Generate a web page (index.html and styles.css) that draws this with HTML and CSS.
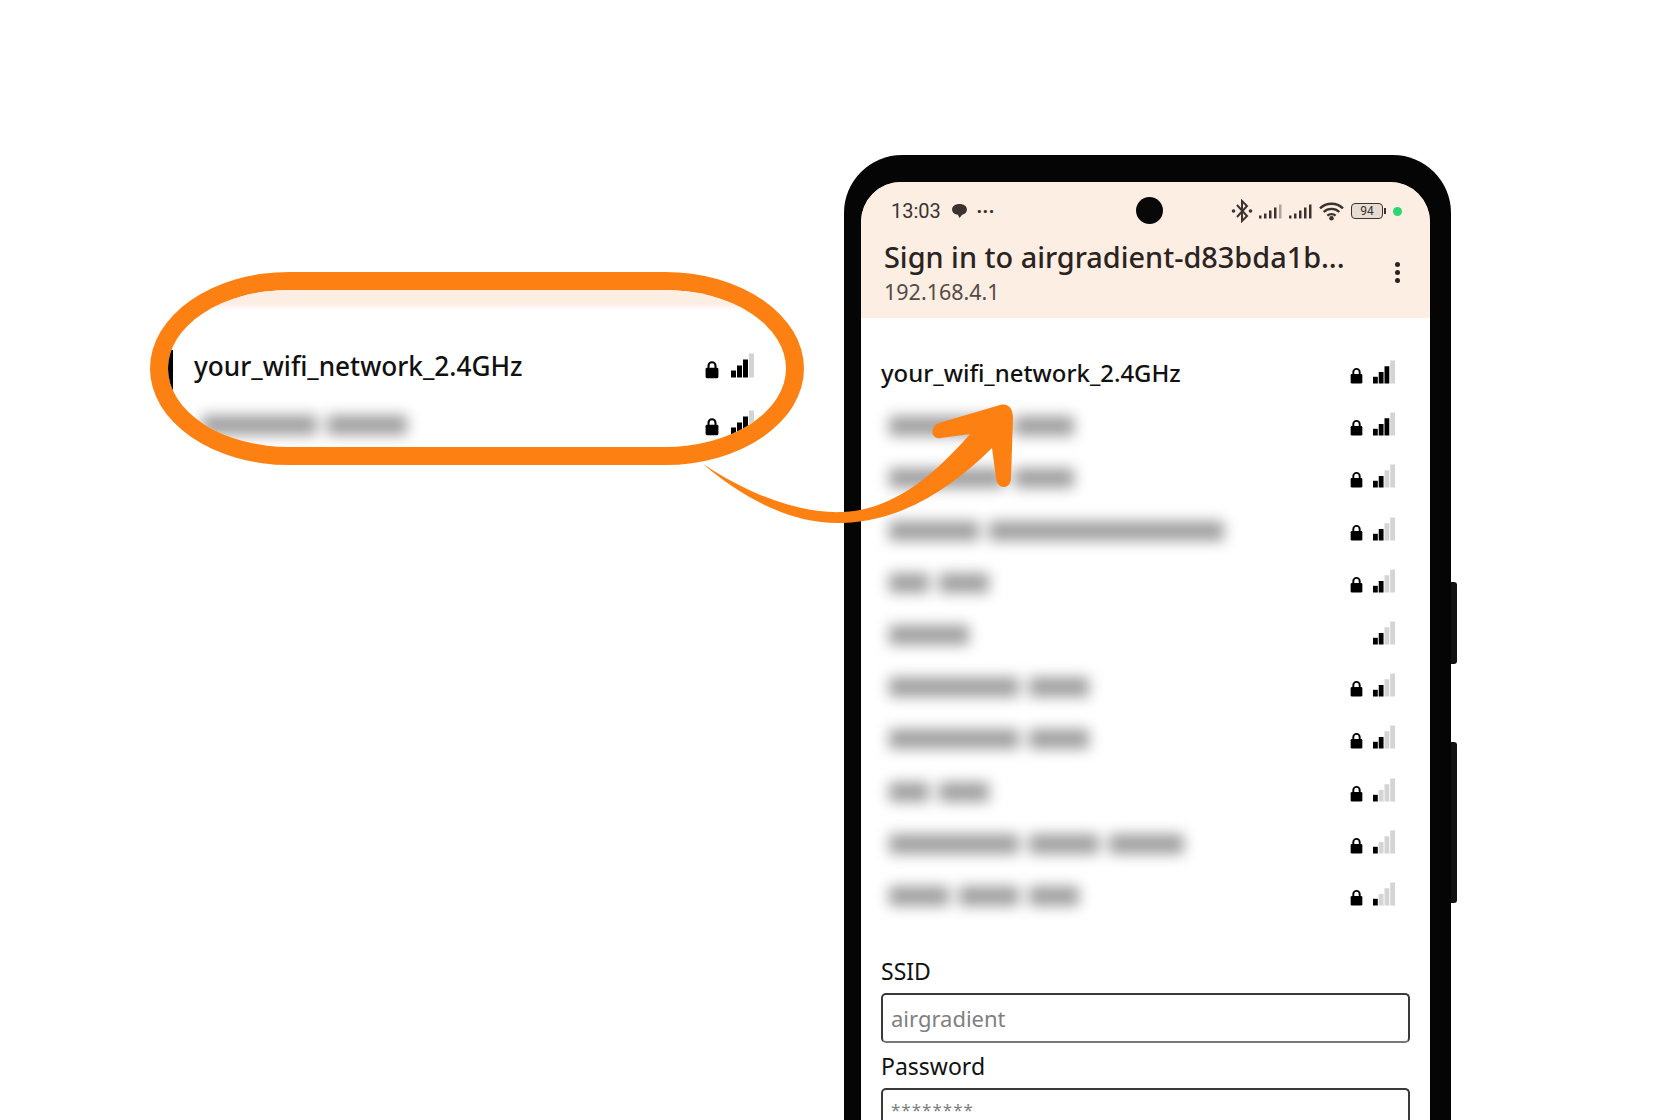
FILE: index.html
```html
<!DOCTYPE html>
<html lang="en">
<head>
    <meta charset="UTF-8">
    <meta name="viewport" content="width=device-width, initial-scale=1.0">
    <title>Select WiFi network</title>
    <link rel="stylesheet" href="styles.css">
</head>
<body>
    <svg class="defs" width="0" height="0">
        <symbol id="lock" viewBox="0 0 12 16">
            <path d="M3 7V4.800a3 3 0 0 1 6 0V7" fill="none" stroke="#000" stroke-width="1.800"/>
            <rect x="0.500" y="6.500" width="11" height="9" rx="1.200" fill="#000"/>
        </symbol>
        <symbol id="signal" viewBox="0 0 24 24">
            <rect class="bar-1" x="0" y="17" width="5" height="7"/>
            <rect class="bar-2" x="6" y="12" width="5" height="12"/>
            <rect class="bar-3" x="12" y="6" width="5" height="18"/>
            <rect class="bar-4" x="18" y="0" width="5" height="24"/>
        </symbol>
    </svg>

    <div class="canvas">
        <div class="callout">
            <div class="callout-inner">
                <div class="callout-tint"></div>
                <div class="callout-edge"></div>
                <div class="callout-row">
                    <span class="callout-name">your_wifi_network_2.4GHz</span>
                    <span class="icons">
                        <svg class="lock"><use href="#lock"/></svg>
                        <svg class="signal level-3"><use href="#signal"/></svg>
                    </span>
                </div>
                <div class="callout-row">
                    <span class="smudge"><i class="s-115"></i><i class="s-80"></i></span>
                    <span class="icons">
                        <svg class="lock"><use href="#lock"/></svg>
                        <svg class="signal level-3"><use href="#signal"/></svg>
                    </span>
                </div>
            </div>
        </div>

        <div class="phone">
            <div class="side-button side-button-top"></div>
            <div class="side-button side-button-bottom"></div>
            <div class="screen">
                <header class="app-head">
                    <div class="status-bar">
                        <div class="status-left">
                            <span class="clock">13:03</span>
                            <svg class="chat" viewBox="0 0 16 15"><path d="M8 1c4 0 7 2 7 5s-2.500 4.500-4.500 5L8 14l-1.500-3C3.500 10.500 1 9 1 6s3-5 7-5z" fill="#3a3330"/></svg>
                            <span class="more">···</span>
                        </div>
                        <div class="camera"></div>
                        <div class="status-right">
                            <svg class="bt" viewBox="0 0 22 24"><path d="M6 6l10 11-5 5V2l5 5L6 18" fill="none" stroke="#3a3330" stroke-width="2"/><circle cx="2.500" cy="12" r="1.800" fill="#3a3330"/><circle cx="19.500" cy="12" r="1.800" fill="#3a3330"/></svg>
                            <svg class="cell" viewBox="0 0 24 14"><g fill="#3a3330"><rect x="0" y="11" width="2.500" height="3"/><rect x="5" y="9" width="2.500" height="5"/><rect x="10" y="6" width="2.500" height="8"/><rect x="15" y="3" width="2.500" height="11"/></g><rect x="20" y="0" width="2.500" height="14" fill="#aaa5a0"/></svg>
                            <svg class="cell" viewBox="0 0 24 14"><g fill="#3a3330"><rect x="0" y="11" width="2.500" height="3"/><rect x="5" y="9" width="2.500" height="5"/><rect x="10" y="6" width="2.500" height="8"/><rect x="15" y="3" width="2.500" height="11"/><rect x="20" y="0" width="2.500" height="14"/></g></svg>
                            <svg class="wifi" viewBox="0 0 24 18"><g fill="none" stroke="#3a3330" stroke-width="2.300"><path d="M1 6c6-6 16-6 22 0"/><path d="M4.500 9.500c4-4 11-4 15 0"/><path d="M8 13c2.200-2 5.800-2 8 0"/></g><circle cx="12" cy="15.500" r="2.200" fill="#3a3330"/></svg>
                            <span class="battery"><span class="battery-level">94</span></span>
                            <span class="battery-tip"></span>
                            <span class="dot-green"></span>
                        </div>
                    </div>
                    <div class="title-bar">
                        <div>
                            <h1 class="page-title">Sign in to airgradient-d83bda1b...</h1>
                            <p class="page-url">192.168.4.1</p>
                        </div>
                        <div class="menu-dots"><span></span><span></span><span></span></div>
                    </div>
                </header>

                <main class="portal">
                    <ul class="networks">
                        <li class="network">
                            <span class="network-name">your_wifi_network_2.4GHz</span>
                            <span class="icons"><svg class="lock"><use href="#lock"/></svg><svg class="signal level-3"><use href="#signal"/></svg></span>
                        </li>
                        <li class="network">
                            <span class="smudge"><i class="s-115"></i><i class="s-60"></i></span>
                            <span class="icons"><svg class="lock"><use href="#lock"/></svg><svg class="signal level-3"><use href="#signal"/></svg></span>
                        </li>
                        <li class="network">
                            <span class="smudge"><i class="s-115"></i><i class="s-60"></i></span>
                            <span class="icons"><svg class="lock"><use href="#lock"/></svg><svg class="signal level-2"><use href="#signal"/></svg></span>
                        </li>
                        <li class="network">
                            <span class="smudge"><i class="s-90"></i><i class="s-235"></i></span>
                            <span class="icons"><svg class="lock"><use href="#lock"/></svg><svg class="signal level-2"><use href="#signal"/></svg></span>
                        </li>
                        <li class="network">
                            <span class="smudge"><i class="s-40"></i><i class="s-50"></i></span>
                            <span class="icons"><svg class="lock"><use href="#lock"/></svg><svg class="signal level-2"><use href="#signal"/></svg></span>
                        </li>
                        <li class="network">
                            <span class="smudge"><i class="s-80"></i></span>
                            <span class="icons"><svg class="signal level-2"><use href="#signal"/></svg></span>
                        </li>
                        <li class="network">
                            <span class="smudge"><i class="s-130"></i><i class="s-60"></i></span>
                            <span class="icons"><svg class="lock"><use href="#lock"/></svg><svg class="signal level-2"><use href="#signal"/></svg></span>
                        </li>
                        <li class="network">
                            <span class="smudge"><i class="s-130"></i><i class="s-60"></i></span>
                            <span class="icons"><svg class="lock"><use href="#lock"/></svg><svg class="signal level-2"><use href="#signal"/></svg></span>
                        </li>
                        <li class="network">
                            <span class="smudge"><i class="s-40"></i><i class="s-50"></i></span>
                            <span class="icons"><svg class="lock"><use href="#lock"/></svg><svg class="signal level-1"><use href="#signal"/></svg></span>
                        </li>
                        <li class="network">
                            <span class="smudge"><i class="s-130"></i><i class="s-70"></i><i class="s-75"></i></span>
                            <span class="icons"><svg class="lock"><use href="#lock"/></svg><svg class="signal level-1"><use href="#signal"/></svg></span>
                        </li>
                        <li class="network">
                            <span class="smudge"><i class="s-60"></i><i class="s-60"></i><i class="s-50"></i></span>
                            <span class="icons"><svg class="lock"><use href="#lock"/></svg><svg class="signal level-1"><use href="#signal"/></svg></span>
                        </li>
                    </ul>

                    <label class="field-label" for="ssid">SSID</label>
                    <input class="field" id="ssid" type="text" placeholder="airgradient">
                    <label class="field-label" for="password">Password</label>
                    <input class="field field-password" id="password" type="text" placeholder="********">
                </main>
            </div>
        </div>

        <svg class="arrow" viewBox="0 0 1680 1120">
            <path d="M703 464C745 500 795 525 843 523C900 521 950 490 992 448L996 478C997 490 1011 490 1011 478L1013 418C1013 408 1008 403 1000 405L939 423C930 426 930 440 941 438L970 434C930 480 890 510 843 512C800 514 750 495 703 464Z" fill="#fd8012"/>
        </svg>
    </div>
</body>
</html>
```

FILE: styles.css
```css
* {
    box-sizing: border-box;
}

body {
    margin: 0;
    background: #fff;
    font-family: "Noto Sans", Arial, sans-serif;
    color: #111;
    overflow: hidden;
}

.defs {
    display: block;
}

.canvas {
    position: relative;
    width: 1680px;
    height: 1120px;
    overflow: hidden;
}

/* callout on the left */
.callout {
    position: absolute;
    left: 150px;
    top: 272px;
    width: 654px;
    height: 193px;
    border: 18px solid #fd8012;
    border-radius: 140px / 97px;
    background: #fff;
    overflow: hidden;
}

.callout-inner {
    position: relative;
    height: 100%;
    padding: 47px 30px 0 26px;
}

.callout-tint {
    position: absolute;
    left: 0;
    right: 0;
    top: 0;
    height: 20px;
    background: linear-gradient(#fdeee4 70%, #fff);
}

.callout-edge {
    position: absolute;
    left: 0;
    top: 60px;
    width: 5px;
    height: 42px;
    background: #000;
}

.callout-row {
    display: flex;
    align-items: center;
    justify-content: space-between;
    height: 57px;
}

.callout-name {
    font-size: 26.200px;
    font-weight: 500;
    color: #111;
}

.callout .icons {
    gap: 12px;
    margin-right: 1px;
}

.callout .lock {
    width: 14px;
    height: 19px;
}

.callout .signal {
    width: 24px;
    height: 27px;
}

.callout .smudge {
    margin-left: 8px;
}

/* phone */
.phone {
    position: absolute;
    left: 844px;
    top: 155px;
    width: 607px;
    height: 1100px;
    padding: 27px 21px 0 17px;
    background: #050505;
    border-radius: 58px 58px 0 0;
}

.side-button {
    position: absolute;
    left: 607px;
    width: 6px;
    background: #111;
    border-radius: 0 3px 3px 0;
}

.side-button-top {
    top: 427px;
    height: 82px;
}

.side-button-bottom {
    top: 587px;
    height: 161px;
}

.screen {
    height: 100%;
    background: #fff;
    border-radius: 40px 40px 0 0;
    overflow: hidden;
}

.app-head {
    height: 136px;
    background: #fdeee4;
    padding: 15px 22px 0 23px;
}

.status-bar {
    position: relative;
    display: flex;
    align-items: center;
    justify-content: space-between;
    height: 28px;
    padding: 0 6px 0 7px;
    color: #3a3330;
}

.status-left,
.status-right {
    display: flex;
    align-items: center;
}

.clock {
    font-size: 20px;
    font-family: Roboto, sans-serif;
}

.chat {
    width: 17px;
    height: 16px;
    margin-left: 10px;
}

.more {
    margin-left: 9px;
    font-size: 18px;
    font-weight: 700;
    letter-spacing: 1px;
    line-height: 1;
}

.camera {
    position: absolute;
    left: 252px;
    top: 0;
    width: 27px;
    height: 27px;
    border-radius: 50%;
    background: #080808;
}

.bt {
    width: 22px;
    height: 24px;
    margin-right: 6px;
}

.cell {
    width: 24px;
    height: 15px;
    margin-right: 6px;
}

.wifi {
    width: 25px;
    height: 19px;
    margin-right: 7px;
}

.battery {
    display: flex;
    align-items: center;
    justify-content: center;
    width: 32px;
    height: 16px;
    border: 1.500px solid #3a3330;
    border-radius: 4px;
    background: #e6dcd4;
}

.battery-level {
    font-size: 12px;
    line-height: 1;
    font-family: Roboto, sans-serif;
}

.battery-tip {
    width: 2px;
    height: 6px;
    margin-left: 1px;
    background: #3a3330;
}

.dot-green {
    width: 9px;
    height: 9px;
    margin-left: 7px;
    border-radius: 50%;
    background: #2ed573;
}

.title-bar {
    display: flex;
    align-items: center;
    justify-content: space-between;
}

.page-title {
    margin: 14px 0 0;
    font-size: 28.850px;
    line-height: 36px;
    font-weight: 500;
    color: #2b2320;
    white-space: nowrap;
}

.page-url {
    margin: 2px 0 0;
    font-size: 21.500px;
    line-height: 30px;
    color: #544b46;
}

.menu-dots {
    display: flex;
    flex-direction: column;
    gap: 3px;
    margin: 13px 8px 0 0;
}

.menu-dots span {
    width: 5px;
    height: 5px;
    border-radius: 50%;
    background: #2b2320;
}

.portal {
    padding: 28px 20px 0 20px;
}

.networks {
    list-style: none;
    margin: 0 0 35px;
    padding: 0 14px 0 0;
}

.network {
    display: flex;
    align-items: center;
    justify-content: space-between;
    height: 52.200px;
}

.network-name {
    font-size: 23.900px;
    font-weight: 500;
    color: #111;
}

.icons {
    display: flex;
    align-items: flex-end;
    justify-content: flex-end;
    gap: 10px;
}

.lock {
    width: 13px;
    height: 17px;
}

.signal {
    --b1: #d4d4d4;
    --b2: #d4d4d4;
    --b3: #d4d4d4;
    --b4: #d4d4d4;
    width: 23px;
    height: 24px;
}

.level-1 {
    --b1: #000;
}

.level-2 {
    --b1: #000;
    --b2: #000;
}

.level-3 {
    --b1: #000;
    --b2: #000;
    --b3: #000;
}

.bar-1 { fill: var(--b1); }
.bar-2 { fill: var(--b2); }
.bar-3 { fill: var(--b3); }
.bar-4 { fill: var(--b4); }

/* names that are blurred out in the reference */
.smudge {
    display: flex;
    gap: 10px;
    margin: 4px 0 0 8px;
    filter: blur(7px);
}

.smudge i {
    display: block;
    height: 20px;
    background: #a0a0a0;
}

.s-40 { width: 40px; }
.s-50 { width: 50px; }
.s-60 { width: 60px; }
.s-70 { width: 70px; }
.s-75 { width: 75px; }
.s-80 { width: 80px; }
.s-90 { width: 90px; }
.s-115 { width: 115px; }
.s-130 { width: 130px; }
.s-235 { width: 235px; }

.field-label {
    display: block;
    font-size: 23px;
    line-height: 32px;
    color: #111;
}

.field {
    display: block;
    width: 529px;
    height: 50px;
    margin: 6px 0 7px;
    padding: 0 8px;
    border: 2px solid #3a3a3a;
    border-bottom-color: #777;
    border-radius: 5px;
    font: 22px "Noto Sans", Arial, sans-serif;
    background: #fff;
}

.field::placeholder {
    color: #808080;
    opacity: 1;
}

.field-password {
    padding-bottom: 8px;
    font-size: 17px;
    letter-spacing: 1px;
}

/* pointer from callout to phone */
.arrow {
    position: absolute;
    left: 0;
    top: 0;
    width: 1680px;
    height: 1120px;
    pointer-events: none;
}
```
